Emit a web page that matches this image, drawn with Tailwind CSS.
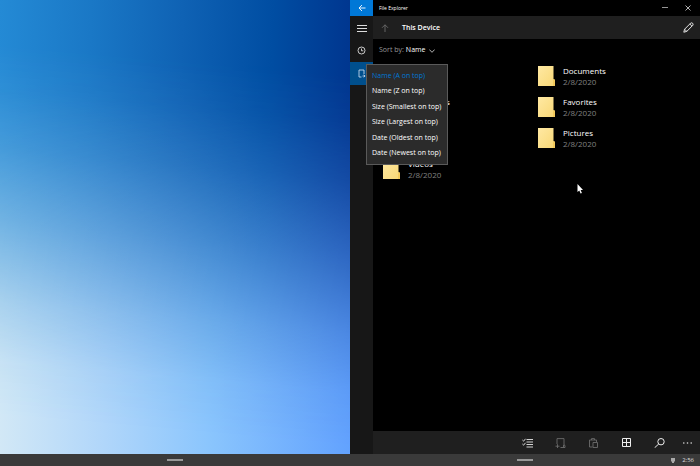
<!DOCTYPE html>
<html lang="en">
<head>
  <meta charset="UTF-8">
  <meta name="viewport" content="width=device-width, initial-scale=1.0">
  <title>File Explorer</title>
  <script src="https://cdn.jsdelivr.net/npm/@tailwindcss/browser@4"></script>
</head>
<body class="bg-black text-white font-['Open_Sans','Noto_Sans',sans-serif] h-screen flex flex-col overflow-hidden">
  <!-- Folder artwork shared by the file list -->
  <svg class="absolute size-0" aria-hidden="true">
    <defs>
      <linearGradient id="folder-fill" x1="0" y1="0" x2="1" y2="1">
        <stop offset="0" stop-color="#ffe9a3"/>
        <stop offset="1" stop-color="#f8d775"/>
      </linearGradient>
      <symbol id="folder" viewBox="0 0 17 20">
        <path d="M0 0h15.500v13l1.500 1v6H0z" fill="url(#folder-fill)"/>
        <path d="M15.500 13.500h1.500V20h-2v-5.500z" fill="#f3ca5c"/>
      </symbol>
    </defs>
  </svg>

  <div class="flex-1 min-h-0 flex">
    <!-- Wallpaper -->
    <div class="w-1/2 bg-[linear-gradient(92deg,#248ad5,#1a78c6_25%,#0f62b4_50%,#004da2_75%,#00328c)]">
      <div class="h-full bg-[linear-gradient(90deg,#d2e8f6,#b0d6fa_30%,#8ac5fd_60%,#62a2fe)] [mask-image:linear-gradient(185deg,transparent_15%,rgba(0,0,0,.06)_25%,rgba(0,0,0,.2)_37%,rgba(0,0,0,.45)_52%,rgba(0,0,0,.77)_69%,rgba(0,0,0,.94)_81%,black_92%)]"></div>
    </div>

    <!-- File Explorer -->
    <div class="w-1/2 flex relative">
      <nav class="w-[23px] bg-[#171717] flex flex-col">
        <button aria-label="Back" class="h-4 bg-[#0078d7] flex items-center justify-center">
          <svg class="size-2" viewBox="0 0 8 8" fill="none" stroke="#fff" stroke-width=".9"><path d="M7.500 4H1M4 1 1 4l3 3"/></svg>
        </button>
        <button aria-label="Menu" class="h-[23px] flex items-center justify-center">
          <svg class="w-[10px] h-2" viewBox="0 0 10 8" stroke="#ddd" stroke-width="1"><path d="M0 1.500h10M0 4.500h10M0 7.500h10"/></svg>
        </button>
        <button aria-label="Recent" class="h-[23px] flex items-center justify-center">
          <svg class="size-[9px]" viewBox="0 0 9 9" fill="none" stroke="#ddd" stroke-width=".9"><circle cx="4.500" cy="4.500" r="3.500"/><path d="M4.500 2.500v2.300h1.800"/></svg>
        </button>
        <button aria-label="This Device" class="h-[23px] bg-[#004f8c] flex items-center justify-center">
          <svg class="size-[9px]" viewBox="0 0 9 9" fill="none" stroke="#d5e6f5" stroke-width=".8"><path d="M4.500 8H2V1h5v4"/><path d="M5.500 7h2.500M6.800 5.700 8.100 7 6.800 8.300"/></svg>
        </button>
      </nav>

      <div class="flex-1 min-w-0 flex flex-col">
        <div class="h-4 pl-[6px] pr-[9px] flex items-center justify-between">
          <span class="text-[5px] leading-4">File Explorer</span>
          <div class="flex gap-[17px]">
            <button aria-label="Minimize"><svg class="size-[6px]" viewBox="0 0 6 6" stroke="#bbb" stroke-width=".8"><path d="M0 2.500h6"/></svg></button>
            <button aria-label="Close"><svg class="size-[6px]" viewBox="0 0 6 6" stroke="#ddd" stroke-width=".8"><path d="M.5.5l5 5M5.500.5l-5 5"/></svg></button>
          </div>
        </div>

        <header class="h-[23px] bg-[#1f1f1f] pl-2 pr-[6px] flex items-center">
          <button aria-label="Up">
            <svg class="size-2" viewBox="0 0 8 8" fill="none" stroke="#6c6c6c" stroke-width=".9"><path d="M4 8V.8M1 3.800l3-3 3 3"/></svg>
          </button>
          <h1 class="ml-[13px] flex-1 text-[7px] leading-3 font-semibold">This Device</h1>
          <button aria-label="Edit path">
            <svg class="size-[11px]" viewBox="0 0 11 11" fill="none" stroke="#e5e5e5" stroke-width="1"><path d="M.8 10.200l.8-3L7.700 1.100c1.300-1 3 .7 2.200 2.100L3.800 9.400zM6.800 2l2.200 2.200M1.600 7.200l2.200 2.200"/></svg>
          </button>
        </header>

        <main class="flex-1 pl-[6px]">
          <div class="h-[21px] pt-[2px] flex items-center gap-[2px] text-[7px]">
            <span class="text-[#999]">Sort by:</span>
            <button class="flex items-center gap-1" aria-haspopup="listbox" aria-expanded="true">Name
              <svg class="w-[6px] h-1" viewBox="0 0 6 4" fill="none" stroke="#ddd" stroke-width=".8"><path d="M.3.5 3 3.300 5.700.5"/></svg>
            </button>
          </div>
          <ul class="grid grid-cols-[155px_1fr] pl-1">
            <li class="h-[31px] flex items-center gap-2"><svg class="w-[17px] h-5"><use href="#folder"/></svg><p class="text-[8px] leading-[11px]">Desktop<br><span class="text-[#808080]">2/8/2020</span></p></li>
            <li class="h-[31px] flex items-center gap-2"><svg class="w-[17px] h-5"><use href="#folder"/></svg><p class="text-[8px] leading-[11px]">Documents<br><span class="text-[#808080]">2/8/2020</span></p></li>
            <li class="h-[31px] flex items-center gap-2"><svg class="w-[17px] h-5"><use href="#folder"/></svg><p class="text-[8px] leading-[11px]">Downloads<br><span class="text-[#808080]">2/8/2020</span></p></li>
            <li class="h-[31px] flex items-center gap-2"><svg class="w-[17px] h-5"><use href="#folder"/></svg><p class="text-[8px] leading-[11px]">Favorites<br><span class="text-[#808080]">2/8/2020</span></p></li>
            <li class="h-[31px] flex items-center gap-2"><svg class="w-[17px] h-5"><use href="#folder"/></svg><p class="text-[8px] leading-[11px]">Music<br><span class="text-[#808080]">2/8/2020</span></p></li>
            <li class="h-[31px] flex items-center gap-2"><svg class="w-[17px] h-5"><use href="#folder"/></svg><p class="text-[8px] leading-[11px]">Pictures<br><span class="text-[#808080]">2/8/2020</span></p></li>
            <li class="h-[31px] flex items-center gap-2"><svg class="w-[17px] h-5"><use href="#folder"/></svg><p class="text-[8px] leading-[11px]">Videos<br><span class="text-[#808080]">2/8/2020</span></p></li>
          </ul>
        </main>

        <footer class="h-[23px] bg-[#1f1f1f] pr-[7px] flex items-center justify-end gap-[17px]">
          <div class="flex items-center gap-[22px]">
            <button aria-label="Select">
              <svg class="w-[11px] h-[10px]" viewBox="0 0 11 10" fill="none" stroke="#e5e5e5" stroke-width=".9"><path d="M4.500 1.500H11M4.500 4H11M4.500 6.500H11M4.500 9H11M.4 2l1.200 1.200L3.500.8M.4 6l1.200 1.200 1.900-2.400"/></svg>
            </button>
            <button aria-label="New folder" disabled>
              <svg class="w-[11px] h-[10px]" viewBox="0 0 11 10" fill="none" stroke="#6c6c6c" stroke-width=".9"><path d="M2 6V.6h7V7l1 .5v2H5.500M8.500 9.500V7M.5 8.200h4M2.500 6.200v4"/></svg>
            </button>
            <button aria-label="Paste" disabled>
              <svg class="w-[11px] h-[10px]" viewBox="0 0 11 10" fill="none" stroke="#6c6c6c" stroke-width=".9"><path d="M4.500 9H1.500V2h7v2M3.500 2V.6h3V2M5 4.500h4.500v5H5z"/></svg>
            </button>
            <button aria-label="View">
              <svg class="w-[11px] h-[10px]" viewBox="0 0 11 10" fill="none" stroke="#eee" stroke-width="1"><path d="M1.500.5h8v8h-8zM5.500.5v8M1.500 4.500h8"/></svg>
            </button>
            <button aria-label="Search">
              <svg class="w-[11px] h-[10px]" viewBox="0 0 11 10" fill="none" stroke="#eee" stroke-width="1"><circle cx="7" cy="3.700" r="3.200"/><path d="M4.700 6 .6 9.800"/></svg>
            </button>
          </div>
          <button aria-label="More">
            <svg class="w-[11px] h-[10px]" viewBox="0 0 11 10" fill="#ddd"><circle cx="1.800" cy="5" r=".8"/><circle cx="5.500" cy="5" r=".8"/><circle cx="9.200" cy="5" r=".8"/></svg>
          </button>
        </footer>
      </div>

      <!-- Sort menu -->
      <div role="listbox" aria-label="Sort by" class="absolute left-4 top-16 w-[82px] h-[101px] py-[3px] flex flex-col bg-[#2b2b2b] border border-[#5a5a5a] text-[7px]">
        <button role="option" aria-selected="true" class="flex-1 pl-[5px] text-left whitespace-nowrap text-[#0078d7]">Name (A on top)</button>
        <button role="option" class="flex-1 pl-[5px] text-left whitespace-nowrap">Name (Z on top)</button>
        <button role="option" class="flex-1 pl-[5px] text-left whitespace-nowrap">Size (Smallest on top)</button>
        <button role="option" class="flex-1 pl-[5px] text-left whitespace-nowrap">Size (Largest on top)</button>
        <button role="option" class="flex-1 pl-[5px] text-left whitespace-nowrap">Date (Oldest on top)</button>
        <button role="option" class="flex-1 pl-[5px] text-left whitespace-nowrap">Date (Newest on top)</button>
      </div>

      <!-- Mouse pointer -->
      <svg class="absolute left-[227px] top-[184px] w-[6px] h-[10px]" viewBox="0 0 6 10"><path d="M.5 0v8l1.800-1.600L3.600 9.500l1.300-.6-1.300-2.900H6z" fill="#fff"/></svg>
    </div>
  </div>

  <!-- Taskbar -->
  <div class="h-3 bg-[#3a3a3a] grid grid-cols-2 items-center relative">
    <div class="mx-auto w-4 h-[2px] bg-[#999]"></div>
    <div class="mx-auto w-4 h-[2px] bg-[#999]"></div>
    <div class="absolute inset-y-0 right-[6px] flex items-center gap-[7px]">
      <svg class="w-1 h-[5px]" viewBox="0 0 4 5" fill="#aaa"><path d="M0 0h4v3.500H3V5H1V3.500H0z"/></svg>
      <span class="text-[6px] leading-3 text-[#ddd]">2:56</span>
    </div>
  </div>
</body>
</html>
